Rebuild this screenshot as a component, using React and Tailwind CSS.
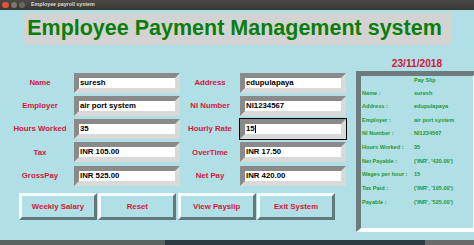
const LEFT_ROWS = [
  ['Name', 'suresh', 'Address', 'edupulapaya'],
  ['Employer', 'air port system', 'NI Number', 'NI1234567'],
  ['Hours Worked', '35', 'Hourly Rate', '15'],
  ['Tax', 'INR 105.00', 'OverTime', 'INR 17.50'],
  ['GrossPay', 'INR 525.00', 'Net Pay', 'INR 420.00'],
]

const SLIP = [
  ['Name :', 'suresh'],
  ['Address :', 'edupulapaya'],
  ['Employer :', 'air port system'],
  ['NI Number :', 'NI1234567'],
  ['Hours Worked :', '35'],
  ['Net Payable :', "('INR', '420.00')"],
  ['Wages per hour :', '15'],
  ['Tax Paid :', "('INR', '105.00')"],
  ['Payable :', "('INR', '525.00')"],
]

const BUTTONS = ['Weekly Salary', 'Reset', 'View Payslip', 'Exit System']

function Entry({ value, focused }) {
  return (
    <div
      className={`h-[20px] border-[5px] border-t-[#8a8a8a] border-l-[#8a8a8a] border-r-[#d9d9d9] border-b-[#d9d9d9] bg-white flex items-center pl-[1px] text-[7.8px] font-bold text-black leading-none ${focused ? 'outline outline-black' : ''}`}
    >
      <span>{value}</span>
      {focused && <span className="w-px h-[8px] bg-black ml-[0.5px]" />}
    </div>
  )
}

function Label({ children, className = '' }) {
  return (
    <div className={`h-[20px] flex items-center justify-center text-[7.8px] font-bold text-[#d4163c] ${className}`}>
      {children}
    </div>
  )
}

export default function App() {
  return (
    <div className="w-[474px] h-[245px] bg-[#b0e0e6] flex flex-col overflow-hidden font-['Liberation_Sans',Arial,sans-serif]">
      {/* window title bar */}
      <div className="h-[10px] shrink-0 bg-gradient-to-b from-[#4a4945] to-[#383733] flex items-center pl-[2px] gap-[2.5px]">
        <div className="w-[6.5px] h-[6.5px] rounded-full bg-[#e2533a]" />
        <div className="w-[5.5px] h-[5.5px] rounded-full bg-[#7a7873]" />
        <div className="w-[5.5px] h-[5.5px] rounded-full bg-[#6a6864]" />
        <span className="ml-[4px] text-[5.3px] font-bold text-[#dedad2] leading-none">Employee payroll system</span>
      </div>

      {/* heading */}
      <div className="pt-[3px] pl-[23px] shrink-0">
        <div className="w-[429px] h-[32px] bg-[#d3d3d3] flex items-center justify-center pr-[6px]">
          <h1 className="text-[21.5px] font-bold text-[#0b7d0b] leading-none">Employee Payment Management system</h1>
        </div>
      </div>

      <div className="flex flex-1 min-h-0">
        {/* form + buttons */}
        <div className="w-[356px] shrink-0 pt-[27.5px]">
          <div className="grid grid-cols-[74px_106px_60px_106px] gap-y-[3.3px]">
            {LEFT_ROWS.map(([l1, v1, l2, v2]) => (
              <div key={l1} className="contents">
                <Label className="pl-[6px]">{l1}</Label>
                <Entry value={v1} />
                <Label>{l2}</Label>
                <Entry value={v2} focused={l2 === 'Hourly Rate'} />
              </div>
            ))}
          </div>
          <div className="flex gap-[1.33px] pl-[19px] mt-[7.3px]">
            {BUTTONS.map(b => (
              <button
                key={b}
                className="w-[78px] h-[27px] border-[3px] border-t-[#f4fbfc] border-l-[#f4fbfc] border-b-[#62787b] border-r-[#62787b] bg-[#b0e0e6] text-[7.8px] font-bold text-[#d4163c]"
              >
                {b}
              </button>
            ))}
          </div>
        </div>

        {/* date + payslip */}
        <div className="w-[122px] shrink-0 pt-[12.8px]">
          <div className="text-center text-[10.2px] font-bold leading-[12px] text-[#d4163c]">23/11/2018</div>
          <div className="mt-[1.2px] h-[161px] border-[5px] border-b-4 border-t-[#6d7b7f] border-l-[#6d7b7f] border-b-white border-r-white pl-[1px] text-[5.6px] font-bold text-[#24962f]">
            <div className="leading-[8.6px] pl-[52px] mb-[2px]">Pay Slip</div>
            {SLIP.map(([k, v]) => (
              <div key={k} className="flex leading-[13.63px] whitespace-nowrap">
                <span className="w-[52px] shrink-0">{k}</span>
                <span>{v}</span>
              </div>
            ))}
          </div>
        </div>
      </div>

      {/* desktop strip below the window */}
      <div className="h-[5px] shrink-0 flex">
        <div className="w-[165px] bg-[#59635f]" />
        <div className="w-[260px] bg-[#2d3b41]" />
        <div className="flex-1 bg-[#6a6a6a]" />
      </div>
    </div>
  )
}
